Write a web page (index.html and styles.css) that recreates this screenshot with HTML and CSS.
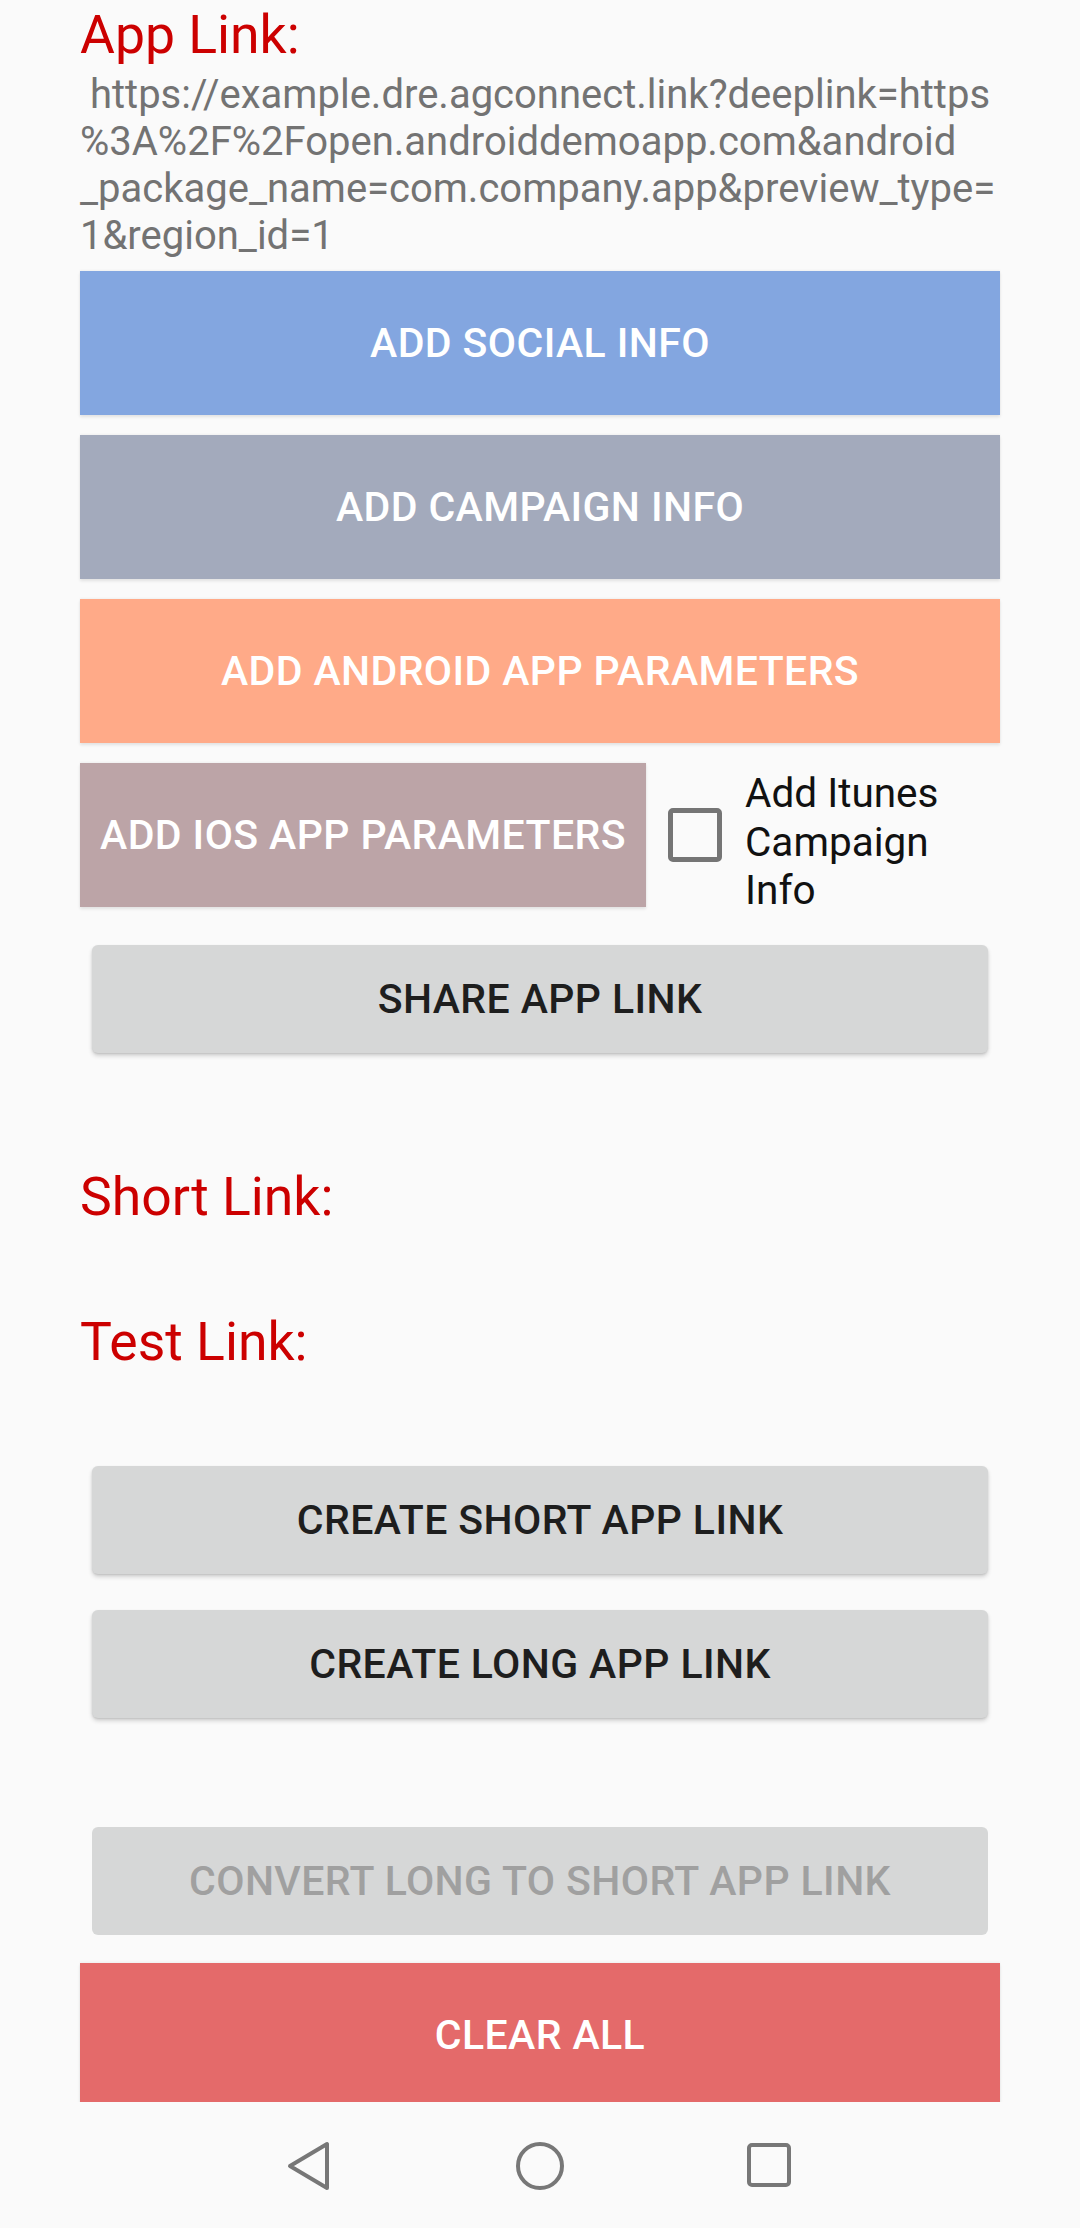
FILE: index.html
```html
<!DOCTYPE html>
<html lang="en">
<head>
<meta charset="utf-8">
<title>App Link</title>
<link rel="stylesheet" href="styles.css">
</head>
<body>
<div class="screen">
  <main class="content">
    <div class="label label-app">App Link:</div>
    <div class="url">&nbsp;https://example.dre.agconnect.link?deeplink=https<br>%3A%2F%2Fopen.androiddemoapp.com&amp;android<br>_package_name=com.company.app&amp;preview_type=<br>1&amp;region_id=1</div>
    <button class="cbtn social">ADD SOCIAL INFO</button>
    <button class="cbtn campaign">ADD CAMPAIGN INFO</button>
    <button class="cbtn android">ADD ANDROID APP PARAMETERS</button>
    <div class="ios-row">
      <button class="cbtn ios">ADD IOS APP PARAMETERS</button>
      <span class="checkbox"></span>
      <span class="check-label">Add Itunes<br>Campaign<br>Info</span>
    </div>
    <button class="gbtn share">SHARE APP LINK</button>
    <div class="label label-short">Short Link:</div>
    <div class="label label-test">Test Link:</div>
    <button class="gbtn create-short">CREATE SHORT APP LINK</button>
    <button class="gbtn create-long">CREATE LONG APP LINK</button>
    <button class="gbtn convert" disabled>CONVERT LONG TO SHORT APP LINK</button>
    <button class="cbtn clear">CLEAR ALL</button>
  </main>
  <nav class="navbar">
    <svg class="nav-icon" width="60" height="60" viewBox="0 0 60 60"><polygon points="47,9 47,53 10,31" fill="none" stroke="#777777" stroke-width="4" stroke-linejoin="round"/></svg>
    <svg class="nav-icon" width="60" height="60" viewBox="0 0 60 60"><circle cx="30" cy="31" r="22" fill="none" stroke="#777777" stroke-width="4"/></svg>
    <svg class="nav-icon" width="60" height="60" viewBox="0 0 60 60"><rect x="9" y="10" width="40" height="40" rx="3" fill="none" stroke="#777777" stroke-width="4"/></svg>
  </nav>
</div>
</body>
</html>
```
FILE: styles.css
```css
* { box-sizing: border-box; }
html, body { margin: 0; padding: 0; }
body {
  background: #fafafa;
  font-family: Roboto, "Noto Sans", "Liberation Sans", sans-serif;
}
.screen {
  width: 1080px;
  height: 2228px;
  display: flex;
  flex-direction: column;
  overflow: hidden;
}
.content {
  height: 2102px;
  flex: none;
  overflow: hidden;
  padding: 0 80px;
  display: flex;
  flex-direction: column;
  align-items: stretch;
}
.content > * { flex-shrink: 0; }
.label {
  color: #cc0000;
  font-size: 53.5px;
  line-height: 61px;
  font-weight: 400;
}
.label-app { margin-top: 4px; }
.url {
  margin-top: 6px;
  color: #737373;
  font-size: 40px;
  line-height: 47px;
  white-space: nowrap;
}
button {
  font-family: Roboto, "Noto Sans", "Liberation Sans", sans-serif;
  font-weight: 500;
  font-size: 41px;
  letter-spacing: 0.4px;
  border: none;
  margin: 0;
  padding: 0;
  text-align: center;
}
.cbtn {
  height: 144px;
  color: #ffffff;
  border-radius: 0;
  box-shadow: 0 2px 3px rgba(0,0,0,0.10), 0 -1px 2px rgba(0,0,0,0.04);
}
.social { margin-top: 12px; background: #83a6e0; }
.campaign { margin-top: 20px; background: #a3aabc; }
.android { margin-top: 20px; background: #ffaa88; }
.ios-row {
  margin-top: 20px;
  height: 144px;
  display: flex;
  align-items: center;
}
.ios {
  width: 566px;
  height: 144px;
  flex: none;
  background: #bca4a7;
}
.checkbox {
  width: 54px;
  height: 54px;
  margin-left: 22px;
  border: 5px solid #757575;
  border-radius: 5px;
  flex: none;
}
.check-label {
  margin-left: 23px;
  font-size: 40.5px;
  line-height: 48.5px;
  color: #111111;
  margin-top: 14px;
}
.gbtn {
  height: 108px;
  margin-left: 12px;
  margin-right: 12px;
  background: #d6d7d7;
  color: #1e1e1e;
  border-radius: 6px;
  box-shadow: 0 3px 4px rgba(0,0,0,0.16), 0 1px 2px rgba(0,0,0,0.10);
}
.share { margin-top: 38px; }
.label-short { margin-top: 113px; }
.label-test { margin-top: 84px; }
.create-short { margin-top: 94px; }
.create-long { margin-top: 36px; }
.convert {
  margin-top: 109px;
  color: #a0a0a0;
  box-shadow: none;
}
.clear {
  margin-top: 28px;
  background: #e46a6a;
}
.navbar {
  height: 126px;
  flex: none;
  background: #fafafa;
  display: flex;
  justify-content: center;
  align-items: center;
  gap: 170px;
}
.nav-icon { display: block; }
```
